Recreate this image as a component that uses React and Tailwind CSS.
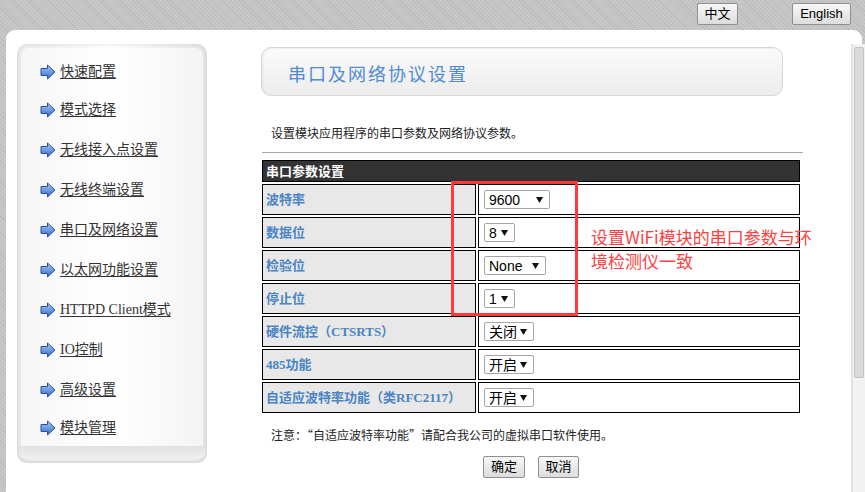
import React from "react";

function Arrow() {
  return (
    <svg width="16" height="16" viewBox="0 0 16 16" className="shrink-0">
      <defs>
        <linearGradient id="arrowg" x1="0" y1="0" x2="0" y2="1">
          <stop offset="0" stopColor="#a9c8f2" />
          <stop offset="0.5" stopColor="#6f9be0" />
          <stop offset="1" stopColor="#3a68c0" />
        </linearGradient>
      </defs>
      <path d="M1 4.5H7.5V1L15 8L7.5 15V11.5H1Z" fill="url(#arrowg)" stroke="#2450a8" strokeWidth="1" strokeLinejoin="round" />
    </svg>
  );
}

function NavItem({ children, h = "h-[40px]" }) {
  return (
    <div className={`flex items-center ${h} pl-[19px] gap-[4px]`}>
      <Arrow />
      <span className="text-[14px] leading-[16px] text-[#333] underline underline-offset-2 font-['Liberation_Serif','Noto_Sans_CJK_SC',serif]">
        {children}
      </span>
    </div>
  );
}

function Sel({ value, w }) {
  return (
    <div
      className="flex items-center justify-between h-[19px] border border-[#a6a6a6] rounded-[2px] bg-white pl-[4px] pr-[6px] font-['Liberation_Sans','Noto_Sans_CJK_SC',sans-serif] text-[14px] leading-[16px] text-black"
      style={{ width: w }}
    >
      <span>{value}</span>
      <svg width="7" height="6" viewBox="0 0 7 6">
        <path d="M0 0H7L3.5 6Z" fill="#111" />
      </svg>
    </div>
  );
}

function Row({ label, value, w }) {
  return (
    <tr>
      <td className="w-[214px] border border-black bg-[#e8e8e8] p-0 leading-none text-[13px] align-middle">
        <div className="h-[29px] flex items-center pl-[3px]">
          <span className="text-[13px] leading-[16px] font-bold text-[#4a84c4] font-['Liberation_Serif','Noto_Sans_CJK_SC',serif]">
            {label}
          </span>
        </div>
      </td>
      <td className="border border-black bg-white p-0 leading-none text-[13px] align-middle">
        <div className="h-[29px] flex items-center pl-[5px]">
          <Sel value={value} w={w} />
        </div>
      </td>
    </tr>
  );
}

function Btn({ children, w }) {
  return (
    <div
      className="flex items-center justify-center h-[22px] border border-[#8f8f8f] rounded-[2px] bg-gradient-to-b from-[#f8f8f8] to-[#dcdcdc] text-[13px] leading-[16px] text-black font-['Liberation_Sans','Noto_Sans_CJK_SC',sans-serif]"
      style={{ width: w }}
    >
      {children}
    </div>
  );
}

export default function App() {
  return (
    <div className="w-[865px] h-[492px] overflow-hidden bg-[#c3c3c3] bg-[image:repeating-linear-gradient(45deg,#bcbcbc_0px,#bcbcbc_1px,#c8c8c8_1px,#c8c8c8_3px)] font-['Noto_Sans_CJK_SC',sans-serif]">
      <div className="h-[30px] flex justify-end items-start pt-[3px] pr-[14px] gap-[54px]">
        <Btn w={41}>中文</Btn>
        <Btn w={59}>English</Btn>
      </div>
      <div className="ml-[6px] mr-[3px] h-[462px] bg-white rounded-t-[9px] flex pt-[14px] pl-[11px]">
        {/* Sidebar */}
        <div className="w-[190px] h-[419px] shrink-0 rounded-[10px] flex flex-col bg-gradient-to-r from-[#ececec] via-white to-[#e6e6e6] shadow-[inset_0_0_5px_rgba(0,0,0,0.12)] overflow-hidden">
          <div className="flex-1 mx-[4px] mt-[4px] rounded-t-[8px] bg-gradient-to-r from-[#f6f6f6] via-white to-[#f4f4f4] pt-[5px]">
            <NavItem h="h-[37px]">快速配置</NavItem>
            <NavItem>模式选择</NavItem>
            <NavItem>无线接入点设置</NavItem>
            <NavItem>无线终端设置</NavItem>
            <NavItem>串口及网络设置</NavItem>
            <NavItem>以太网功能设置</NavItem>
            <NavItem>HTTPD Client模式</NavItem>
            <NavItem>IO控制</NavItem>
            <NavItem>高级设置</NavItem>
            <NavItem h="h-[36px]">模块管理</NavItem>
          </div>
          <div className="h-[19px] bg-gradient-to-b from-[#e2e2e2] to-[#f3f3f3] rounded-b-[10px] shadow-[inset_0_-2px_3px_rgba(0,0,0,0.12)]" />
        </div>

        {/* Main */}
        <div className="relative ml-[53px] w-[545px] shrink-0">
          <div className="ml-[1px] mt-[3px] w-[522px] h-[49px] rounded-[10px] border border-[#d6d6d6] bg-gradient-to-b from-[#fbfbfb] to-[#ececec] shadow-[inset_1px_1px_2px_rgba(0,0,0,0.06)] flex items-center pl-[26px] pt-[2px]">
            <span className="text-[18px] leading-[22px] tracking-[2px] text-[#4f8ad2]">串口及网络协议设置</span>
          </div>
          <div className="ml-[11px] mt-[29px] text-[12px] leading-[16px] text-[#222]">
            设置模块应用程序的串口参数及网络协议参数。
          </div>
          <div className="ml-[2px] mt-[11px] w-[541px] h-[1px] bg-[#a8a8a8]" />
          <table className="mt-[5px] w-[542px] border-separate border-spacing-[2px] leading-none text-[13px]">
            <tbody>
              <tr>
                <td colSpan={2} className="border border-black bg-[#333333] p-0 leading-none align-middle">
                  <div className="h-[20px] flex items-center pl-[3px]">
                    <span className="text-[13px] leading-[16px] font-bold text-white">串口参数设置</span>
                  </div>
                </td>
              </tr>
              <Row label="波特率" value="9600" w={66} />
              <Row label="数据位" value="8" w={31} />
              <Row label="检验位" value="None" w={62} />
              <Row label="停止位" value="1" w={31} />
              <Row label="硬件流控（CTSRTS）" value="关闭" w={50} />
              <Row label="485功能" value="开启" w={50} />
              <Row label="自适应波特率功能（类RFC2117）" value="开启" w={50} />
            </tbody>
          </table>
          <div className="ml-[11px] mt-[12px] text-[12px] leading-[16px] text-[#222]">
            注意：“自适应波特率功能”请配合我公司的虚拟串口软件使用。
          </div>
          <div className="w-[542px] mt-[13px] flex justify-center gap-[13px]">
            <Btn w={42}>确定</Btn>
            <Btn w={41}>取消</Btn>
          </div>

          {/* Annotation overlays */}
          <div className="absolute left-[191px] top-[137px] w-[127px] h-[135px] border-[3px] border-[#ff3b3b]" />
          <div className="absolute left-[331px] top-[181px] text-[17px] leading-[24px] text-[#ff4040] whitespace-nowrap">
            设置WiFi模块的串口参数与环
            <br />
            境检测仪一致
          </div>
        </div>

        {/* Scrollbar */}
        <div className="ml-auto -mr-[3px] w-[14px] shrink-0 border-l-2 border-[#e2e2e2] bg-[#f2f2f2] pt-[3px] pl-[1px] pr-[1px]">
          <div className="h-[331px] bg-[#dadada] border border-[#c2c2c2] rounded-[2px]" />
        </div>
      </div>
    </div>
  );
}
